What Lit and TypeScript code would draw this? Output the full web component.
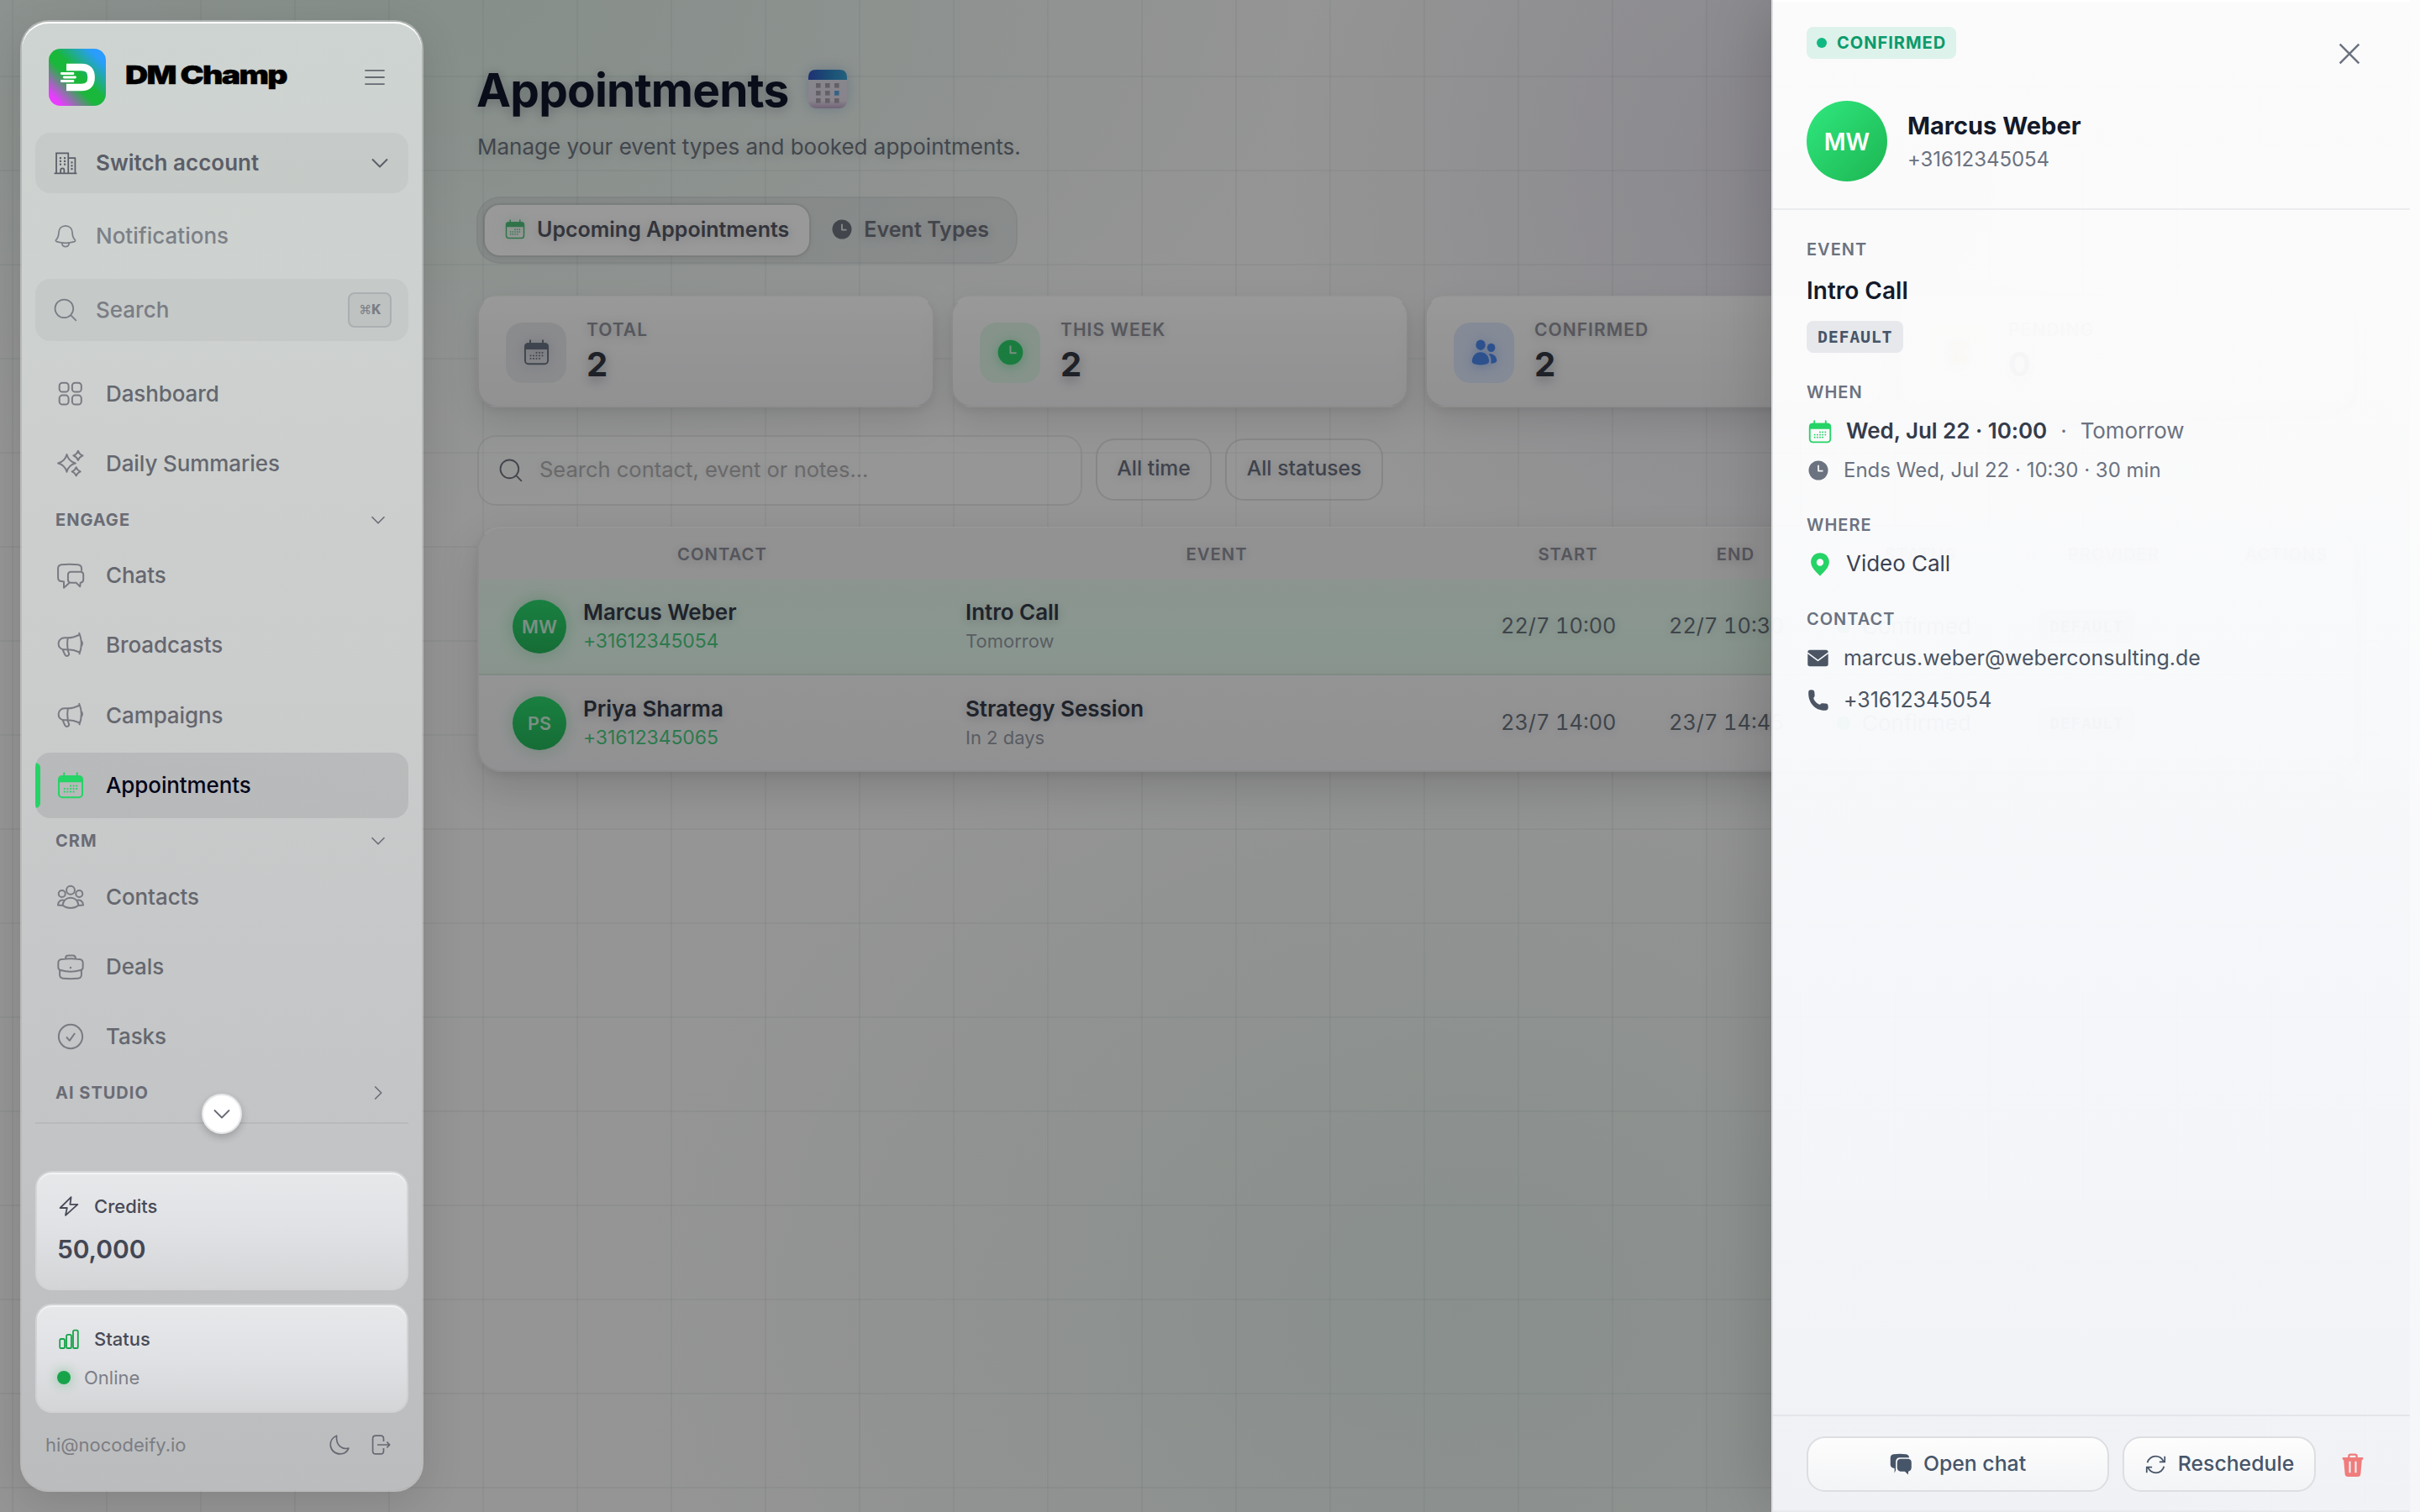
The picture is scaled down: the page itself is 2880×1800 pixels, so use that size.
import { LitElement, html, svg, css, nothing, TemplateResult } from "lit";
import { customElement, property } from "lit/decorators.js";

const star = (x: number, y: number, r: number, k = 0.2) =>
  `M${x} ${y - r}Q${x + r * k} ${y - r * k} ${x + r} ${y}Q${x + r * k} ${y + r * k} ${x} ${y + r}Q${x - r * k} ${y + r * k} ${x - r} ${y}Q${x - r * k} ${y - r * k} ${x} ${y - r}Z`;

const dots = (pts: [number, number][], s = 1.5) =>
  pts.map(([x, y]) => svg`<rect x=${x - s / 2} y=${y - s / 2} width=${s} height=${s} rx=".5" fill="currentColor" stroke="none"/>`);

const calendarDots: [number, number][] = [
  [12, 12.3], [14.7, 12.3], [17.4, 12.3],
  [6.6, 15], [9.3, 15], [12, 15], [14.7, 15], [17.4, 15],
  [6.6, 17.7], [9.3, 17.7], [12, 17.7], [14.7, 17.7],
];

const bldgDots: [number, number][] = [
  [6.8, 7], [11.2, 7], [6.8, 10.2], [11.2, 10.2], [6.8, 13.4], [11.2, 13.4],
  [18.4, 11.5], [18.4, 14.8], [18.4, 18.1],
];

const ICONS: Record<string, TemplateResult> = {
  menu: svg`<path d="M2 5h20M2 12h20M2 19h20"/>`,
  down: svg`<path d="M3 7.5l9 9 9-9"/>`,
  right: svg`<path d="M7.5 3l9 9-9 9"/>`,
  close: svg`<path d="M3.5 3.5l17 17M20.5 3.5l-17 17"/>`,
  search: svg`<circle cx="10.6" cy="10.6" r="9.3"/><path d="M17.3 17.3l5.7 5.7"/>`,
  building: svg`<path d="M.5 22.7h23M2.6 22.5V2.2M1.8 2h13.6M14.8 2v20.5M14.8 7h7.6M21.8 7v15.5M7 22.5v-3.2q0-1.8 1.8-1.8t1.8 1.8v3.2"/>${dots(bldgDots, 1.9)}`,
  bell: svg`<path d="M12 1.6c-4.2 0-6.7 3-6.9 6.8-.2 3.8-.7 5.4-2.3 7-1.300 1.300-.8 2.100.7 2.500 5.400 1.500 11.600 1.500 17 0 1.500-.4 2-1.200.7-2.500-1.600-1.600-2.100-3.200-2.300-7-.2-3.800-2.700-6.800-6.900-6.800ZM8.300 19.200c.3 2.300 1.600 3.700 3.700 3.700s3.400-1.400 3.700-3.700"/>`,
  grid: svg`<rect x="2" y="2" width="8.200" height="8.200" rx="2.700"/><rect x="13.400" y="2" width="8.200" height="8.200" rx="2.700"/><rect x="2" y="13.200" width="8.200" height="8.200" rx="2.700"/><rect x="13.400" y="13.200" width="8.200" height="8.200" rx="2.700"/>`,
  sparkles: svg`<path d=${star(8.6, 11.6, 7.8)}/><path d=${star(18.7, 4.8, 4.2, 0.26)}/><path d=${star(17, 19, 3.8, 0.26)}/>`,
  chats: svg`<path d="M21.800 8V6Q21.800 3 18.800 2.500Q11 1.500 3.600 2.500Q.8 3 .8 6V14Q.8 17 4 17.300L6 17.600V23L11 18.600"/><path d="M12.400 8.800H20.800Q23.400 8.800 23.400 11.500V15.800Q23.400 18.300 20.800 18.500L20.400 22L17 18.600H12.400Q9.700 18.400 9.700 15.800V11.500Q9.700 8.800 12.400 8.800Z"/>`,
  megaphone: svg`<path d="M9.600 5.500H6.500C3.500 5.500 1.200 7.800 1.200 10.800S3.500 16 6.500 16H9.600Q8.600 10.800 9.600 5.500C13.500 5.500 16.500 4.400 19.800 2.800M9.600 16C13.500 16 16.800 17 20 18.400M19.500.900C22.200 7 22.200 14 19.700 20.400M21.700 8.300Q23.200 10.500 21.700 12.700M5 16.200L7 20.600Q8 22.200 9.800 21.400Q11 20.600 10.400 19L9.300 16.200"/>`,
  calendar: svg`<rect x="1.500" y="4" width="21" height="18.600" rx="3"/><path d="M1 9.200V6.400Q1 3.200 4.200 3.200H19.800Q23 3.200 23 6.400V9.200Z" fill="currentColor" stroke="none"/><path d="M6.200 1v3.500M17.800 1v3.500" stroke-linecap="round"/>${dots(calendarDots)}`,
  people: svg`<circle cx="12" cy="5.800" r="3.700"/><circle cx="4.300" cy="9" r="3"/><circle cx="19.700" cy="9" r="3"/><path d="M12 12.500C8 12.500 5.400 15.500 4.900 19.300C9 22.600 15 22.600 19.100 19.300C18.600 15.500 16 12.500 12 12.500ZM6.600 14.900C3.500 14 1 15.500.7 19.100L4.900 19.500M17.400 14.900C20.500 14 23 15.500 23.300 19.100L19.100 19.500"/>`,
  briefcase: svg`<path d="M7.500 4.500Q7.500 1.800 10 1.800H14Q16.500 1.800 16.500 4.500M4 5.200Q12 4 20 5.200Q23 5.600 23 8.500V12.500Q23 14.500 20.800 15Q12 17.500 3.200 15Q1 14.500 1 12.500V8.500Q1 5.600 4 5.200ZM2.300 15V19Q2.300 22 5 22.300Q12 23 19 22.300Q21.700 22 21.700 19V15"/><circle cx="12" cy="12.800" r=".9" fill="currentColor" stroke="none"/>`,
  check: svg`<circle cx="12" cy="12" r="10.600"/><path d="M8.300 12.400l2.800 3.200 4.700-6.600"/>`,
  bolt: svg`<path d="M14.600 1.200L1.600 14H9.800L8 22.800L22.400 9.800H13.400Z"/>`,
  bars: svg`<rect x="1.200" y="12" width="5.800" height="11" rx="1.600"/><rect x="9.100" y="6.800" width="5.800" height="16.200" rx="1.600"/><rect x="17" y="1.600" width="5.800" height="21.400" rx="1.600"/>`,
  moon: svg`<path d="M8.600 1.200C3.800 3 .9 7.500 1.300 12.600C1.800 18.600 6.600 22.900 12.600 22.900C17.300 22.900 21.200 20.200 22.900 16.100C15.500 17.800 7.500 13.500 8.600 1.200Z"/>`,
  logout: svg`<path d="M15.500 8V4.600Q15.500 1.200 12.100 1.200H6Q2.600 1.200 2.600 4.600V19.400Q2.600 22.800 6 22.800H12.100Q15.500 22.800 15.500 19.400V16M8 12H22.600M19.400 8.600L22.800 12L19.400 15.400"/>`,
  clock: svg`<circle cx="12" cy="12" r="11.500" fill="currentColor" stroke="none"/><path class="cut" d="M12 5.800V12.600H17.500"/>`,
  duo: svg`<g fill="currentColor" stroke="none"><ellipse cx="8.600" cy="5.200" rx="4.400" ry="4.800"/><ellipse cx="18.300" cy="7.600" rx="3.700" ry="4"/><path d="M8.500 11.800C4 11.800.600 15.600.600 20.200Q.600 23.600 8.500 23.600T16.400 20.200C16.400 15.600 13 11.800 8.500 11.800Z"/><path d="M16 13.600C18.700 12.900 23.400 14.500 23.500 20Q22.500 22.200 18 22.200C18.600 18.500 18 15.800 16 13.600Z"/></g>`,
  hourglass: svg`<path d="M4 2h16v6l-5 4 5 4v6h-16v-6l5-4-5-4z" fill="currentColor" stroke="none"/>`,
  pin: svg`<path fill="currentColor" stroke="none" fill-rule="evenodd" d="M12 .3C6.700.300 2.700 4.300 2.700 9.500C2.700 15.500 8 19.500 12 23.800C16 19.500 21.300 15.500 21.300 9.500C21.300 4.300 17.300.300 12 .3ZM12 6.200A3.600 3.600 0 1 1 12 13.400A3.600 3.600 0 1 1 12 6.200Z"/>`,
  mail: svg`<rect x=".3" y="2.600" width="23.400" height="18.800" rx="2.600" fill="currentColor" stroke="none"/><path class="cut" d="M0 5.800L12 14.800L24 5.800" stroke-width="1.500"/>`,
  phone: svg`<path fill="currentColor" stroke="none" d="M1.200 2.800C1.400.900 2.400.300 4.200.300C7 .3 7.900 1 8.100 3.800L8.300 6.300C8.400 7.800 8 8.500 6.900 9.500C7.800 13 11 16.200 14.500 17.100C15.500 16 16.200 15.600 17.700 15.700L20.200 15.900C23 16.100 23.700 17 23.700 19.800C23.700 22.800 22.600 23.500 19.800 23.700C9 23.900.5 15 1.200 2.800Z"/>`,
  chatFill: svg`<g fill="currentColor" stroke="none"><path d="M4 1.200Q11 .4 18 1.200Q20.800 1.600 21.300 4.800H11Q6.800 5 6.600 9V18.500L5.200 22V16.600Q1 16.200 .700 13V5Q.900 1.600 4 1.200Z"/><path d="M11.500 6.200H20.500Q23.700 6.500 23.800 10V15.800Q23.600 19.600 20.400 20L20.200 23.600L16.500 20H11.500Q8.200 19.600 8.100 15.800V10Q8.200 6.500 11.500 6.200Z"/></g>`,
  refresh: svg`<path d="M2.500 9.800C3.600 5.600 7.400 2.600 11.800 2.600C15.800 2.600 19 4.800 20.800 8.200M22.300 2.600V9H16.200M21.500 14.200C20.400 18.400 16.600 21.400 12.200 21.400C8.200 21.400 5 19.200 3.200 15.800M1.700 21.400V15H7.800"/>`,
  trash: svg`<path d="M8 4.500V3.200Q8 1.400 9.800 1.400H14.200Q16 1.400 16 3.200V4.500" stroke-width="2"/><path fill="currentColor" stroke="none" fill-rule="evenodd" d="M1.500 4.200H22.500V6.600H21.300L20 21.200Q19.700 24 17 24H7Q4.300 24 4 21.200L2.700 6.600H1.500ZM8.100 8.400H9.900V20H8.100ZM14.100 8.400H15.900V20H14.100Z"/>`,
};

@customElement("ui-icon")
class UiIcon extends LitElement {
  @property() name = "";
  @property({ type: Number }) size = 28;
  @property({ type: Number }) weight = 1.5;
  static styles = css`
    :host { display: inline-flex; flex: none; color: inherit; }
    svg { display: block; fill: none; stroke: currentColor; stroke-linejoin: round; overflow: visible; }
    .cut { stroke: var(--cut, #f8f9fb); }
  `;
  render() {
    return html`<svg width=${this.size} height=${this.size} viewBox="0 0 24 24" stroke-width=${this.weight}>${ICONS[this.name] ?? nothing}</svg>`;
  }
}

const icon = (name: string, size = 28, weight = 1.5, cls = "") =>
  html`<ui-icon class=${cls} name=${name} .size=${size} .weight=${weight}></ui-icon>`;

@customElement("side-bar")
class SideBar extends LitElement {
  static styles = css`
    :host {
      box-sizing: border-box; display: flex; flex-direction: column; flex: none;
      width: 480px; height: 1752px; margin: 24px 0 24px 24px; padding: 0 16px;
      border: 2px solid rgba(255, 255, 255, 0.34); border-radius: 34px;
      background: linear-gradient(180deg, #ced4d1 0%, #cdd1cf 20%, #cbcccc 45%, #c5c7c8 65%, #c2c3c5 80%, #bbbcbe 100%) padding-box;
      box-shadow: inset 0 2px 0 #fff, 0 12px 50px rgba(0, 0, 0, 0.12);
      font-family: Inter, "Liberation Sans", sans-serif; color: #676a73;
      position: relative; z-index: 2;
    }
    .brand { display: flex; align-items: center; height: 132px; padding: 0 26px 0 16px; box-sizing: border-box; }
    .logo { width: 68px; height: 68px; border-radius: 14px; background: linear-gradient(45deg, #e83cff 12%, #19b73a 42%, #19b73a 54%, #2a9dff 86%); }
    .logo svg { display: block; }
    .word { margin-left: 23px; font-size: 30.5px; line-height: 40px; font-weight: 900; letter-spacing: -1.4px; color: #000;
      -webkit-text-stroke: 0.4px #000; white-space: nowrap; transform: translateY(-3px) scaleX(1.235); transform-origin: left; flex: 1; }
    .row { display: flex; align-items: center; box-sizing: border-box; padding: 0 20px 0 22px; font-size: 26px; font-weight: 500; border-radius: 18px; }
    .row ui-icon:first-child { margin-right: 22px; }
    .row .grow { flex: 1; }
    .row > span { margin-top: -1px; }
    .switch { height: 72px; background: rgba(0, 0, 0, 0.035); font-weight: 600; color: #5b5e68; padding-right: 22px; }
    .notif { height: 102px; color: #7c8087; }
    .search { height: 74px; background: rgba(20, 20, 60, 0.04); color: #7a7d84; }
    kbd { box-sizing: border-box; width: 52px; height: 42px; border: 2px solid #acafb1; border-radius: 8px; background: rgba(0, 0, 0, 0.03);
      display: flex; align-items: center; justify-content: center; font: 700 19px/1 "Liberation Mono", "DejaVu Sans Mono", monospace; letter-spacing: -0.5px; }
    kbd span { font: 400 15px "DejaVu Sans", sans-serif; }
    nav { margin-top: 24px; height: 908px; box-sizing: border-box; border-bottom: 2px solid #b8b9bb; position: relative; }
    .item { display: flex; align-items: center; height: 78px; padding-left: 26px; margin-bottom: 5.35px; gap: 26px; box-sizing: border-box;
      font-size: 26px; font-weight: 500; letter-spacing: -0.1px; border-radius: 18px; color: #65676f; }
    .item span { margin-top: -1px; }
    .item ui-icon { color: #797b82; }
    .item.last { margin-bottom: 0; }
    .active { background: linear-gradient(90deg, rgba(10, 12, 20, 0.09), rgba(10, 12, 20, 0.085)); color: #03061a; overflow: hidden; }
    .active::before { content: ""; width: 6px; height: 54px; margin: 0 -6px 0 -26px; border-radius: 0 6px 6px 0; background: #25d366; }
    .active ui-icon { color: #25d366; }
    .head { display: flex; align-items: center; justify-content: space-between; height: 54.7px; padding: 0 26px 0 24px;
      font-size: 20px; font-weight: 700; letter-spacing: 1px; color: #696c76; }
    .more { position: absolute; left: 198px; bottom: -14px; width: 48px; height: 48px; box-sizing: border-box; border-radius: 50%; background: #fff;
      border: 2px solid #e6e7e9; display: flex; align-items: center; justify-content: center; box-shadow: 0 4px 10px rgba(0, 0, 0, 0.2); }
    .card { box-sizing: border-box; border: 2px solid rgba(255, 255, 255, 0.3); border-radius: 20px; padding: 18px 26px;
      background: linear-gradient(180deg, #e7e8ea, #e0e1e4 50%, #d4d5d7) padding-box; box-shadow: inset 0 2px 0 rgba(255, 255, 255, 0.5); color: #474a57; }
    .credits { height: 142px; margin-top: 56px; padding-left: 24px; }
    .credits .line { padding-left: 2px; }
    .status { height: 130px; margin-top: 16px; padding-top: 14px; padding-left: 24px; }
    .line { display: flex; align-items: center; gap: 18px; height: 44px; font-size: 22px; font-weight: 500; }
    .status .line { padding-left: 2px; height: 52px; }
    .g { color: #17a34a; }
    .big { font-size: 30px; font-weight: 600; line-height: 36px; margin-top: 11px; color: #434754; letter-spacing: -0.1px; }
    .on { display: flex; align-items: center; gap: 16px; font-size: 22px; line-height: 30px; color: #7c7f88; margin-top: 5px; }
    .on i { width: 16px; height: 16px; border-radius: 50%; background: #17a34a; box-shadow: 0 0 14px rgba(23, 163, 74, 0.45); }
    .foot { display: flex; align-items: center; height: 76px; padding: 0 21px 0 12px; font-size: 22px; color: #7b7d83; }
    .foot span { flex: 1; }
    .foot ui-icon { color: #666972; margin-left: 25px; }
  `;
  item(name: string, label: string, cls = "") {
    return html`<div class="item ${cls}">${icon(name, 32)}<span>${label}</span></div>`;
  }
  head(label: string, arrow = "down") {
    return html`<div class="head"><span>${label}</span>${icon(arrow, 20, 2)}</div>`;
  }
  render() {
    return html`
      <div class="brand">
        <div class="logo">
          <svg width="68" height="68" viewBox="0 0 68 68" fill="none" stroke="#fff">
            <path d="M21 22H39Q50.600 22 50.600 34Q50.600 46 39 46H21" stroke-width="8.600" />
            <path d="M15.300 29.500H29M18.300 34H31.500M15.300 38.500H29" stroke-width="2.800" stroke-linecap="round" />
          </svg>
        </div>
        <div class="word">DM Champ</div>
        ${icon("menu", 28, 1.6)}
      </div>
      <div class="row switch">${icon("building")}<span class="grow">Switch account</span>${icon("down", 24, 2)}</div>
      <div class="row notif">${icon("bell")}<span>Notifications</span></div>
      <div class="row search">${icon("search")}<span class="grow">Search</span><kbd><span>⌘</span>K</kbd></div>
      <nav>
        ${this.item("grid", "Dashboard")} ${this.item("sparkles", "Daily Summaries", "last")}
        ${this.head("ENGAGE")}
        ${this.item("chats", "Chats")} ${this.item("megaphone", "Broadcasts")} ${this.item("megaphone", "Campaigns")}
        ${this.item("calendar", "Appointments", "active last")}
        ${this.head("CRM")}
        ${this.item("people", "Contacts")} ${this.item("briefcase", "Deals")} ${this.item("check", "Tasks", "last")}
        ${this.head("AI STUDIO", "right")}
        <div class="more">${icon("down", 24, 1.8)}</div>
      </nav>
      <div class="card credits">
        <div class="line">${icon("bolt", 24, 1.8)}<span>Credits</span></div>
        <div class="big">50,000</div>
      </div>
      <div class="card status">
        <div class="line">${icon("bars", 24, 1.8, "g")}<span>Status</span></div>
        <div class="on"><i></i><span>Online</span></div>
      </div>
      <div class="foot"><span>hi@nocodeify.io</span>${icon("moon", 24, 1.7)}${icon("logout", 24, 1.7)}</div>
    `;
  }
}

const STATS = [
  { label: "TOTAL", value: 2, icon: "calendar", tone: "grey" },
  { label: "THIS WEEK", value: 2, icon: "clock", tone: "green" },
  { label: "CONFIRMED", value: 2, icon: "duo", tone: "blue" },
  { label: "PENDING", value: 0, icon: "hourglass", tone: "amber" },
];

const ROWS = [
  { initials: "MW", name: "Marcus Weber", phone: "+31612345054", event: "Intro Call", rel: "Tomorrow", start: "22/7 10:00", end: "22/7 10:30", on: true },
  { initials: "PS", name: "Priya Sharma", phone: "+31612345065", event: "Strategy Session", rel: "In 2 days", start: "23/7 14:00", end: "23/7 14:45", on: false },
];

@customElement("appointments-page")
class AppointmentsPage extends LitElement {
  static styles = css`
    :host { display: block; flex: none; width: 2236px; margin-left: 64px; padding-top: 75px; box-sizing: border-box;
      font-family: Inter, "Liberation Sans", sans-serif; position: relative; }
    h1 { margin: 0 0 0 -1px; display: flex; align-items: center; gap: 23px; height: 64px; font-size: 55px; font-weight: 700; letter-spacing: -0.8px; color: #0f172a;
      text-shadow: 0 2px 14px rgba(15, 23, 42, 0.28); }
    h1 svg { filter: drop-shadow(0 0 8px rgba(80, 130, 190, 0.35)); margin-top: -2px; }
    p { margin: 18px 0 41px; font-size: 26px; line-height: 36px; color: #6f7580; text-shadow: 0 2px 12px rgba(60, 65, 80, 0.2); white-space: nowrap; }
    .tabs { display: inline-flex; box-sizing: border-box; height: 80px; padding: 6px; border: 2px solid rgba(0, 0, 0, 0.035); border-radius: 28px; background: rgba(30, 40, 70, 0.06); margin-left: -1px; }
    .tab { display: flex; align-items: center; gap: 14px; padding: 0 24px; border: 2px solid transparent; border-radius: 20px; font-size: 25px; font-weight: 600;
      color: #70747f; text-shadow: 0 2px 12px rgba(60, 65, 80, 0.22); --cut: #e8e9eb; padding-bottom: 2px; }
    .tab + .tab { margin-left: -1px; letter-spacing: 0.05px; }
    .tab.on { background: #fff; background-clip: padding-box; border-color: rgba(0, 0, 0, 0.07); color: #555864; box-shadow: 0 2px 8px rgba(0, 0, 0, 0.06); }
    .tab.on ui-icon { color: #50c07c; filter: drop-shadow(0 0 7px rgba(80, 192, 124, 0.3)); }
    .stats { display: grid; grid-template-columns: repeat(4, 1fr); gap: 20px; margin-top: 38px; }
    .stat { box-sizing: border-box; height: 133px; display: flex; align-items: center; gap: 24px; padding: 0 32px; border-radius: 24px;
      border: 2px solid rgba(0, 0, 0, 0.07); border-top-color: rgba(255, 255, 255, 0.7);
      background: linear-gradient(180deg, #ffffff, #fafafa 30%, #f2f2f5); box-shadow: 0 16px 40px rgba(0, 0, 0, 0.1), 0 4px 10px rgba(0, 0, 0, 0.06); }
    .box { width: 72px; height: 72px; border-radius: 20px; display: flex; align-items: center; justify-content: center; margin-top: 3px; }
    .box ui-icon { filter: drop-shadow(0 2px 7px color-mix(in srgb, currentColor 45%, transparent)); margin-top: -1px; }
    .grey { background: #e7e8ec; color: #6a7482; }
    .green { background: #dff6e8; color: #2cd06a; --cut: #c8efd6; }
    .blue { background: #dde6fa; color: #4b88ec; }
    .amber { background: #fdf0d8; color: #d99a2b; }
    .label { font-size: 21px; line-height: 26px; font-weight: 600; letter-spacing: 1.05px; color: #8f929b; text-shadow: 0 2px 12px rgba(90, 95, 110, 0.3); }
    .value { font-size: 40px; line-height: 48px; font-weight: 700; margin-top: 4px; color: #343844; text-shadow: 0 4px 14px rgba(30, 34, 50, 0.35); }
    .filters { display: flex; align-items: flex-start; gap: 16px; margin-top: 33px; }
    .find { box-sizing: border-box; width: 720px; height: 84px; border: 2px solid rgba(0, 0, 0, 0.075); border-radius: 22px; display: flex; align-items: center; gap: 20px; padding: 0 24px;
      font-size: 25.5px; color: #b0b0b2; background: rgba(255, 255, 255, 0.25); text-shadow: 0 2px 12px rgba(0, 0, 0, 0.12); }
    .find span { margin-top: -3px; }
    .find ui-icon { color: #70747f; }
    .pill { box-sizing: border-box; height: 74px; margin-top: 4px; border: 2px solid rgba(0, 0, 0, 0.1); border-radius: 22px; display: flex; align-items: center; justify-content: center;
      padding-bottom: 4px; font-size: 24.7px; font-weight: 500; color: #6a7180; background: rgba(255, 255, 255, 0.25); text-shadow: 0 2px 12px rgba(60, 65, 90, 0.22); }
    .w1 { width: 138px; } .w2 { width: 188px; }
    .table { box-sizing: border-box; margin-top: 25px; border: 2px solid rgba(0, 0, 0, 0.06); border-top-color: rgba(255, 255, 255, 0.7); border-radius: 28px; overflow: hidden;
      background: linear-gradient(180deg, #f6f6f6, #fafafa 40%, #f2f2f5); }
    .shade { border-radius: 28px; box-shadow: 0 20px 50px rgba(0, 0, 0, 0.14), 0 4px 10px rgba(0, 0, 0, 0.07); }
    .thead { display: grid; grid-template-columns: 578px 599px 237px 162px 278px 182px 1fr; height: 60px; align-items: center; text-align: center; background: #f5f4f5;
      font-size: 20.3px; font-weight: 600; letter-spacing: 1px; color: #8e9099; text-shadow: 0 2px 12px rgba(90, 95, 110, 0.3); }
    .thead span { padding-left: 1px; }
    .thead span:last-child { padding-left: 34px; }
    .tr { display: grid; grid-template-columns: 579px 637px 200px 200px 240px 1fr; height: 113px; align-items: center; box-sizing: border-box; }
    .tr.on { background: linear-gradient(180deg, #e9f8ef, #e5fbef 60%, #e4f6ec); border-bottom: 2px solid #d6e6dd; height: 115px; }
    .who { display: flex; align-items: center; gap: 20px; padding-left: 40px; }
    .av { width: 64px; height: 64px; border-radius: 50%; display: flex; align-items: center; justify-content: center; background: linear-gradient(180deg, #2bd56c, #25b65a);
      color: #cdeedb; font-size: 21.5px; font-weight: 600; box-shadow: 0 0 20px rgba(37, 182, 90, 0.3); }
    .nm { font-size: 26px; line-height: 34px; font-weight: 600; color: #353b49; letter-spacing: -0.05px; text-shadow: 0 2px 12px rgba(40, 46, 60, 0.25); }
    .ph { font-size: 23px; line-height: 30px; margin-top: 2px; color: #4ccb80; margin-bottom: 2px; letter-spacing: -0.1px; }
    .rel { font-size: 22px; line-height: 30px; margin-top: 2px; color: #959ba4; margin-bottom: 2px; }
    .t { font-size: 25.3px; font-variant-numeric: tabular-nums; color: #6a737c; padding-bottom: 3px; text-shadow: 0 2px 12px rgba(60, 65, 80, 0.2); }
    .st { display: flex; align-items: center; gap: 14px; font-size: 26px; color: #5f6673; }
    .st i { width: 16px; height: 16px; border-radius: 50%; background: #10b981; }
    .tag { justify-self: start; box-sizing: border-box; height: 38px; padding: 0 13px; border-radius: 8px; background: #dfe1e6; color: #475569;
      font: 700 20px/38px "DejaVu Sans Mono", "Liberation Mono", monospace; letter-spacing: 0.6px; }
  `;
  render() {
    return html`
      <h1>
        Appointments
        <svg width="46" height="46" viewBox="0 0 46 46">
          <defs>
            <linearGradient id="top" x1="0" x2="1"><stop offset="0" stop-color="#3553c4" /><stop offset=".5" stop-color="#2d80c4" /><stop offset="1" stop-color="#3ba2d0" /></linearGradient>
            <linearGradient id="sheet" x1="0" x2="0" y1="0" y2="1"><stop offset="0" stop-color="#e1e1ee" /><stop offset=".8" stop-color="#e4dcea" /><stop offset="1" stop-color="#bda6c6" /></linearGradient>
          </defs>
          <rect width="46" height="46" rx="9" fill="url(#sheet)" />
          <path d="M0 12V9Q0 0 9 0H37Q46 0 46 9V12Z" fill="url(#top)" />
          ${[9, 20, 31].map((x) => [16, 25, 34].map((y) => svg`<rect x=${x} y=${y} width="5.600" height="5.600" fill=${x === 31 && y === 25 ? "#5aa5dc" : "#a8a1ae"} />`))}
        </svg>
      </h1>
      <p>Manage your event types and booked appointments.</p>
      <div class="tabs">
        <div class="tab on">${icon("calendar", 24, 1.5)}Upcoming Appointments</div>
        <div class="tab">${icon("clock", 24, 1.8)}Event Types</div>
      </div>
      <div class="stats">
        ${STATS.map((s) => html`
          <div class="stat">
            <div class="box ${s.tone}">${icon(s.icon, 31, 1.5)}</div>
            <div><div class="label">${s.label}</div><div class="value">${s.value}</div></div>
          </div>`)}
      </div>
      <div class="filters">
        <div class="find">${icon("search", 28, 1.6)}<span>Search contact, event or notes...</span></div>
        <div class="pill w1">All time</div>
        <div class="pill w2">All statuses</div>
      </div>
      <div class="shade"><div class="table">
        <div class="thead">${["CONTACT", "EVENT", "START", "END", "STATUS", "PROVIDER", "ACTIONS"].map((h) => html`<span>${h}</span>`)}</div>
        ${ROWS.map((r) => html`
          <div class="tr ${r.on ? "on" : ""}">
            <div class="who"><div class="av">${r.initials}</div><div><div class="nm">${r.name}</div><div class="ph">${r.phone}</div></div></div>
            <div><div class="nm">${r.event}</div><div class="rel">${r.rel}</div></div>
            <div class="t">${r.start}</div>
            <div class="t">${r.end}</div>
            <div class="st"><i></i>Confirmed</div>
            <div class="tag">DEFAULT</div>
          </div>`)}
      </div></div>
    `;
  }
}

@customElement("detail-drawer")
class DetailDrawer extends LitElement {
  static styles = css`
    :host { position: absolute; top: 0; right: 0; z-index: 3; box-sizing: border-box; width: 772px; height: 1800px; display: flex; flex-direction: column;
      border-left: 2px solid #dcdde1; border-right: 12px solid rgba(255, 255, 255, 0.35);
      background: linear-gradient(180deg, rgba(255, 255, 255, 0.965) 0%, rgba(255, 255, 255, 0.962) 20%, rgba(252, 253, 255, 0.962) 45%, rgba(243, 244, 248, 0.975) 100%);
      box-shadow: -10px 0 70px rgba(0, 0, 0, 0.17), inset 0 2px 0 #fff, inset 0 -2px 0 #e6e8eb;
      font-family: Inter, "Liberation Sans", sans-serif; color: #6b7280; }
    header { height: 250px; box-sizing: border-box; border-bottom: 2px solid #ebecee; padding: 32px 56px 0 40px; }
    .top { display: flex; justify-content: space-between; align-items: flex-start; height: 38px; }
    .badge { display: flex; align-items: center; height: 38px; padding: 0 12px; gap: 12px; border-radius: 8px; background: #ddf2ea; color: #0c9a6c; font-size: 20px; font-weight: 700; letter-spacing: 1px; }
    .badge i { width: 12px; height: 12px; border-radius: 50%; background: #10b981; }
    .top ui-icon { margin-top: 16px; }
    .who { display: flex; align-items: center; gap: 24px; margin-top: 50px; }
    .av { width: 96px; height: 96px; border-radius: 50%; background: linear-gradient(135deg, #2ee37a 10%, #1eb955 92%); color: #fff; font-size: 28px; font-weight: 600; display: flex; align-items: center; justify-content: center; padding-top: 2px; box-sizing: border-box; }
    .name { font-size: 29px; line-height: 38px; font-weight: 700; color: #131a2b; margin-top: 1px; }
    .ph { font-size: 24px; line-height: 34px; margin-top: 4px; letter-spacing: -0.05px; }
    .body { flex: 1; padding: 32px 40px; display: flex; flex-direction: column; align-items: flex-start; }
    .lab { font-size: 20px; line-height: 30px; font-weight: 600; letter-spacing: 1px; color: #6b7280; margin-top: 33px; }
    .lab:first-child { margin-top: 0; }
    .ttl { font-size: 28px; line-height: 40px; font-weight: 600; color: #131a2b; margin-top: 14px; }
    .tag { height: 38px; margin-top: 16px; padding: 0 13px; border-radius: 8px; background: #e6e8eb; color: #475569; font: 700 20px/38px "DejaVu Sans Mono", "Liberation Mono", monospace; letter-spacing: 0.7px; }
    .tag + .lab { margin-top: 32px; }
    .ln { display: flex; align-items: center; line-height: 36px; }
    .a { font-size: 26px; margin-top: 13px; color: #3b4252; letter-spacing: -0.04px; }
    .a ui-icon { color: #25d366; margin: 2px 17px 0 2px; }
    .a b { font-weight: 600; color: #353c4b; }
    .a em { font-style: normal; color: #6b7280; margin-left: 16px; letter-spacing: -0.1px; }
    .b { font-size: 24px; line-height: 34px; margin-top: 12px; }
    .b ui-icon { margin: 0 18px 0 2px; }
    .c { font-size: 25px; margin-top: 13px; color: #4b5563; letter-spacing: -0.03px; }
    .c ui-icon { margin: 0 18px 0 1px; }
    .c + .c { margin-top: 14px; }
    footer { height: 116px; box-sizing: border-box; border-top: 2px solid #e3e5ea; padding: 24px 40px 0; display: flex; align-items: flex-start; gap: 16px; }
    button { box-sizing: border-box; height: 66px; padding: 0 0 3px; border: 2px solid #dcdee1; border-radius: 22px; background: linear-gradient(180deg, #fdfdfd, #f3f4f6); color: #475569;
      font: 500 24.8px Inter, sans-serif; display: flex; align-items: center; justify-content: center; gap: 14px; }
    button ui-icon { margin-top: 3px; }
    .open { width: 360px; } .re { width: 230px; padding-left: 1px; }
    footer > ui-icon { color: #f07c7c; margin: 20px 0 0 14px; }
  `;
  render() {
    return html`
      <header>
        <div class="top"><div class="badge"><i></i>CONFIRMED</div>${icon("close", 32, 1.9)}</div>
        <div class="who"><div class="av">MW</div><div><div class="name">Marcus Weber</div><div class="ph">+31612345054</div></div></div>
      </header>
      <div class="body">
        <div class="lab">EVENT</div>
        <div class="ttl">Intro Call</div>
        <div class="tag">DEFAULT</div>
        <div class="lab">WHEN</div>
        <div class="ln a">${icon("calendar", 28, 1.6)}<b>Wed, Jul 22 · 10:00</b><em>·</em><em>Tomorrow</em></div>
        <div class="ln b">${icon("clock", 24, 1.7)}Ends Wed, Jul 22 · 10:30 · 30 min</div>
        <div class="lab">WHERE</div>
        <div class="ln a">${icon("pin", 28)}Video Call</div>
        <div class="lab">CONTACT</div>
        <div class="ln c">${icon("mail", 25)}marcus.weber@weberconsulting.de</div>
        <div class="ln c">${icon("phone", 25)}+31612345054</div>
      </div>
      <footer>
        <button class="open">${icon("chatFill", 26)}Open chat</button>
        <button class="re">${icon("refresh", 25, 1.7)}Reschedule</button>
        ${icon("trash", 28)}
      </footer>
    `;
  }
}

@customElement("app-root")
class AppRoot extends LitElement {
  static styles = css`
    :host { display: block; position: relative; width: 2880px; height: 1800px; overflow: hidden; }
    .app { display: flex; height: 1800px;
      background:
        linear-gradient(rgba(60, 90, 85, 0.055) 2px, transparent 2px) 0 90px / 112px 112px,
        linear-gradient(90deg, rgba(60, 90, 85, 0.055) 2px, transparent 2px) 14px 0 / 112px 112px,
        radial-gradient(ellipse 1100px 620px at 500px 0, rgba(205, 232, 217, 0.6), transparent 100%),
        radial-gradient(ellipse 620px 620px at 2150px 200px, rgba(212, 206, 226, 0.5), transparent 100%),
        radial-gradient(ellipse 1000px 800px at 1740px 1560px, rgba(215, 234, 225, 0.6), transparent 100%),
        #f8f8f8; }
    .scrim { position: absolute; inset: 0; z-index: 1; background: rgba(0, 0, 0, 0.4); }
  `;
  render() {
    return html`
      <div class="app">
        <side-bar></side-bar>
        <appointments-page></appointments-page>
      </div>
      <div class="scrim"></div>
      <detail-drawer></detail-drawer>
    `;
  }
}
